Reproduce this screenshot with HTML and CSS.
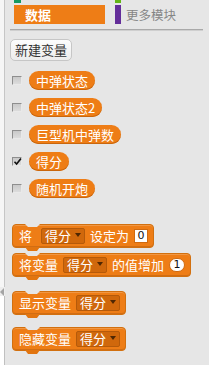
FILE: index.html
```html
<!DOCTYPE html>
<html>
<head>
<meta charset="utf-8">
<link rel="stylesheet" href="styles.css">
</head>
<body>
<div class="app">
  <div class="edge">
    <div class="edge-top"></div>
    <div class="edge-arrow"><span class="tri"></span></div>
    <div class="edge-bottom"></div>
  </div>
  <div class="palette">
    <div class="cats">
      <div class="cat">
        <span class="marker m-green"></span>
        <div class="tab tab-data">数据</div>
      </div>
      <div class="cat">
        <span class="marker m-lime"></span>
        <div class="tab tab-more"><span class="bar"></span><span class="tab-label">更多模块</span></div>
      </div>
    </div>
    <div class="rule"></div>
    <button class="new-var">新建变量</button>
    <ul class="vars">
      <li class="var"><span class="check"></span><span class="pill">中弹状态</span></li>
      <li class="var"><span class="check"></span><span class="pill">中弹状态2</span></li>
      <li class="var"><span class="check"></span><span class="pill">巨型机中弹数</span></li>
      <li class="var"><span class="check checked"><svg width="9" height="9" viewBox="0 0 9 9"><path d="M1.5 4.8 L3.6 7 L8 1.5" fill="none" stroke="#111" stroke-width="1.6"/></svg></span><span class="pill">得分</span></li>
      <li class="var"><span class="check"></span><span class="pill">随机开炮</span></li>
    </ul>
    <div class="blocks">
      <div class="block b1"><span class="lbl lbl-wide">将</span><span class="dd">得分<i class="arrow"></i></span><span class="lbl">设定为</span><span class="num">0</span></div>
      <div class="block b2"><span class="lbl">将变量</span><span class="dd">得分<i class="arrow"></i></span><span class="lbl">的值增加</span><span class="num round">1</span></div>
      <div class="block b3"><span class="lbl">显示变量</span><span class="dd">得分<i class="arrow"></i></span></div>
      <div class="block b4"><span class="lbl">隐藏变量</span><span class="dd">得分<i class="arrow"></i></span></div>
    </div>
  </div>
</div>
</body>
</html>
```
FILE: styles.css
```css
html, body {
  margin: 0;
  padding: 0;
}
body {
  width: 209px;
  height: 365px;
  overflow: hidden;
  background: #e6e6e6;
  font-family: "Noto Sans CJK SC", "Noto Sans", sans-serif;
  font-size: 13px;
}
.app {
  display: flex;
  height: 365px;
}
.edge {
  width: 5px;
  display: flex;
  flex-direction: column;
}
.edge-top {
  height: 287px;
  background: #f6f6f6;
  border-right: 1px solid #c6c6c6;
}
.edge-arrow {
  height: 9px;
  display: flex;
  align-items: center;
  background: #ededed;
}
.tri {
  width: 0;
  height: 0;
  border-top: 4px solid transparent;
  border-bottom: 4px solid transparent;
  border-right: 4px solid #a4a4a4;
}
.edge-bottom {
  flex: 1;
  background: #ffffff;
  border-right: 1px solid #c0c0c0;
}
.palette {
  flex: 1;
  display: flex;
  flex-direction: column;
}
.cats {
  display: flex;
  margin-left: 9px;
  gap: 10px;
}
.cat {
  display: flex;
  flex-direction: column;
  align-items: flex-start;
  gap: 2px;
}
.marker {
  display: block;
  width: 7px;
  height: 3px;
}
.m-green { background: #149a62; }
.m-lime { background: #62b516; width: 6px; }
.tab {
  height: 19px;
  line-height: 19px;
}
.tab-data {
  width: 80px;
  padding-left: 11px;
  background: #ee7d16;
  color: #fff;
  font-weight: bold;
}
.tab-more {
  display: flex;
  align-items: center;
}
.bar {
  width: 6px;
  height: 19px;
  background: #632d99;
}
.tab-label {
  margin-left: 5px;
  color: #858585;
  font-size: 12.5px;
}
.rule {
  margin: 5px 6px 0 5px;
  height: 1px;
  background: #a9a9a9;
  border-bottom: 1px solid #cfcfcf;
}
.new-var {
  margin: 8px 0 0 5px;
  width: 62px;
  height: 22px;
  padding: 0;
  border: 1px solid #c6c6c6;
  border-radius: 5px;
  background: linear-gradient(#fdfdfd, #ececec);
  color: #333;
  font-family: inherit;
  font-size: 13px;
  line-height: 20px;
  text-align: center;
  align-self: flex-start;
}
.vars {
  list-style: none;
  margin: 10px 0 0 7px;
  padding: 0;
  display: flex;
  flex-direction: column;
  gap: 8px;
}
.var {
  display: flex;
  align-items: center;
  gap: 7px;
  height: 19px;
}
.check {
  box-sizing: border-box;
  width: 10px;
  height: 9px;
  background: linear-gradient(#c9c9c9, #dcdcdc);
  border-top: 1px solid #8e8e8e;
  border-left: 1px solid #8e8e8e;
  border-right: 1px solid #e9e9e9;
  border-bottom: 1px solid #e9e9e9;
  display: flex;
  align-items: center;
  justify-content: center;
  overflow: visible;
}
.check svg {
  flex: none;
  margin-left: 1px;
}
.pill {
  height: 19px;
  line-height: 19px;
  padding: 0 7px;
  border-radius: 10px;
  background: #ee7d16;
  box-shadow: inset 0 -1px 0 #c9660d;
  color: #fff;
  white-space: nowrap;
}
.blocks {
  margin: 26px 0 0 7px;
  display: flex;
  flex-direction: column;
  align-items: flex-start;
}
.block {
  position: relative;
  box-sizing: border-box;
  height: 24px;
  display: flex;
  align-items: center;
  gap: 5px;
  padding: 0 5px 0 6px;
  background: #ee7d16;
  border: 1px solid #d2700f;
  border-radius: 4px;
  box-shadow: inset 0 1px 0 rgba(255,255,255,0.2), inset 0 -1px 0 rgba(0,0,0,0.12);
  color: #fff;
  white-space: nowrap;
}
.block::before {
  content: "";
  position: absolute;
  top: -1px;
  left: 12px;
  width: 15px;
  height: 3px;
  background: #e6e6e6;
  clip-path: polygon(0 0, 100% 0, 80% 100%, 20% 100%);
}
.block::after {
  content: "";
  position: absolute;
  bottom: -4px;
  left: 12px;
  width: 15px;
  height: 4px;
  background: #e27510;
  clip-path: polygon(0 0, 100% 0, 80% 100%, 20% 100%);
}
.b2 { margin-top: 5px; }
.b3 { margin-top: 14px; }
.b4 { margin-top: 12px; }
.lbl {
  line-height: 20px;
}
.lbl-wide {
  margin-right: 4px;
}
.dd {
  box-sizing: border-box;
  height: 16px;
  display: flex;
  align-items: center;
  padding: 0 3px 0 3px;
  gap: 4px;
  background: #d0680c;
  border: 1px solid #b55a0a;
  border-radius: 2px;
  line-height: 14px;
}
.arrow {
  width: 0;
  height: 0;
  border-left: 3px solid transparent;
  border-right: 3px solid transparent;
  border-top: 4px solid #4f2703;
  margin-top: -3px;
}
.num {
  box-sizing: border-box;
  width: 14px;
  height: 14px;
  background: #fff;
  border: 1px solid #d06a10;
  color: #111;
  font-family: "DejaVu Sans", sans-serif;
  font-size: 11px;
  line-height: 12px;
  text-align: center;
}
.num.round {
  width: 16px;
  border-radius: 7px;
}
```
